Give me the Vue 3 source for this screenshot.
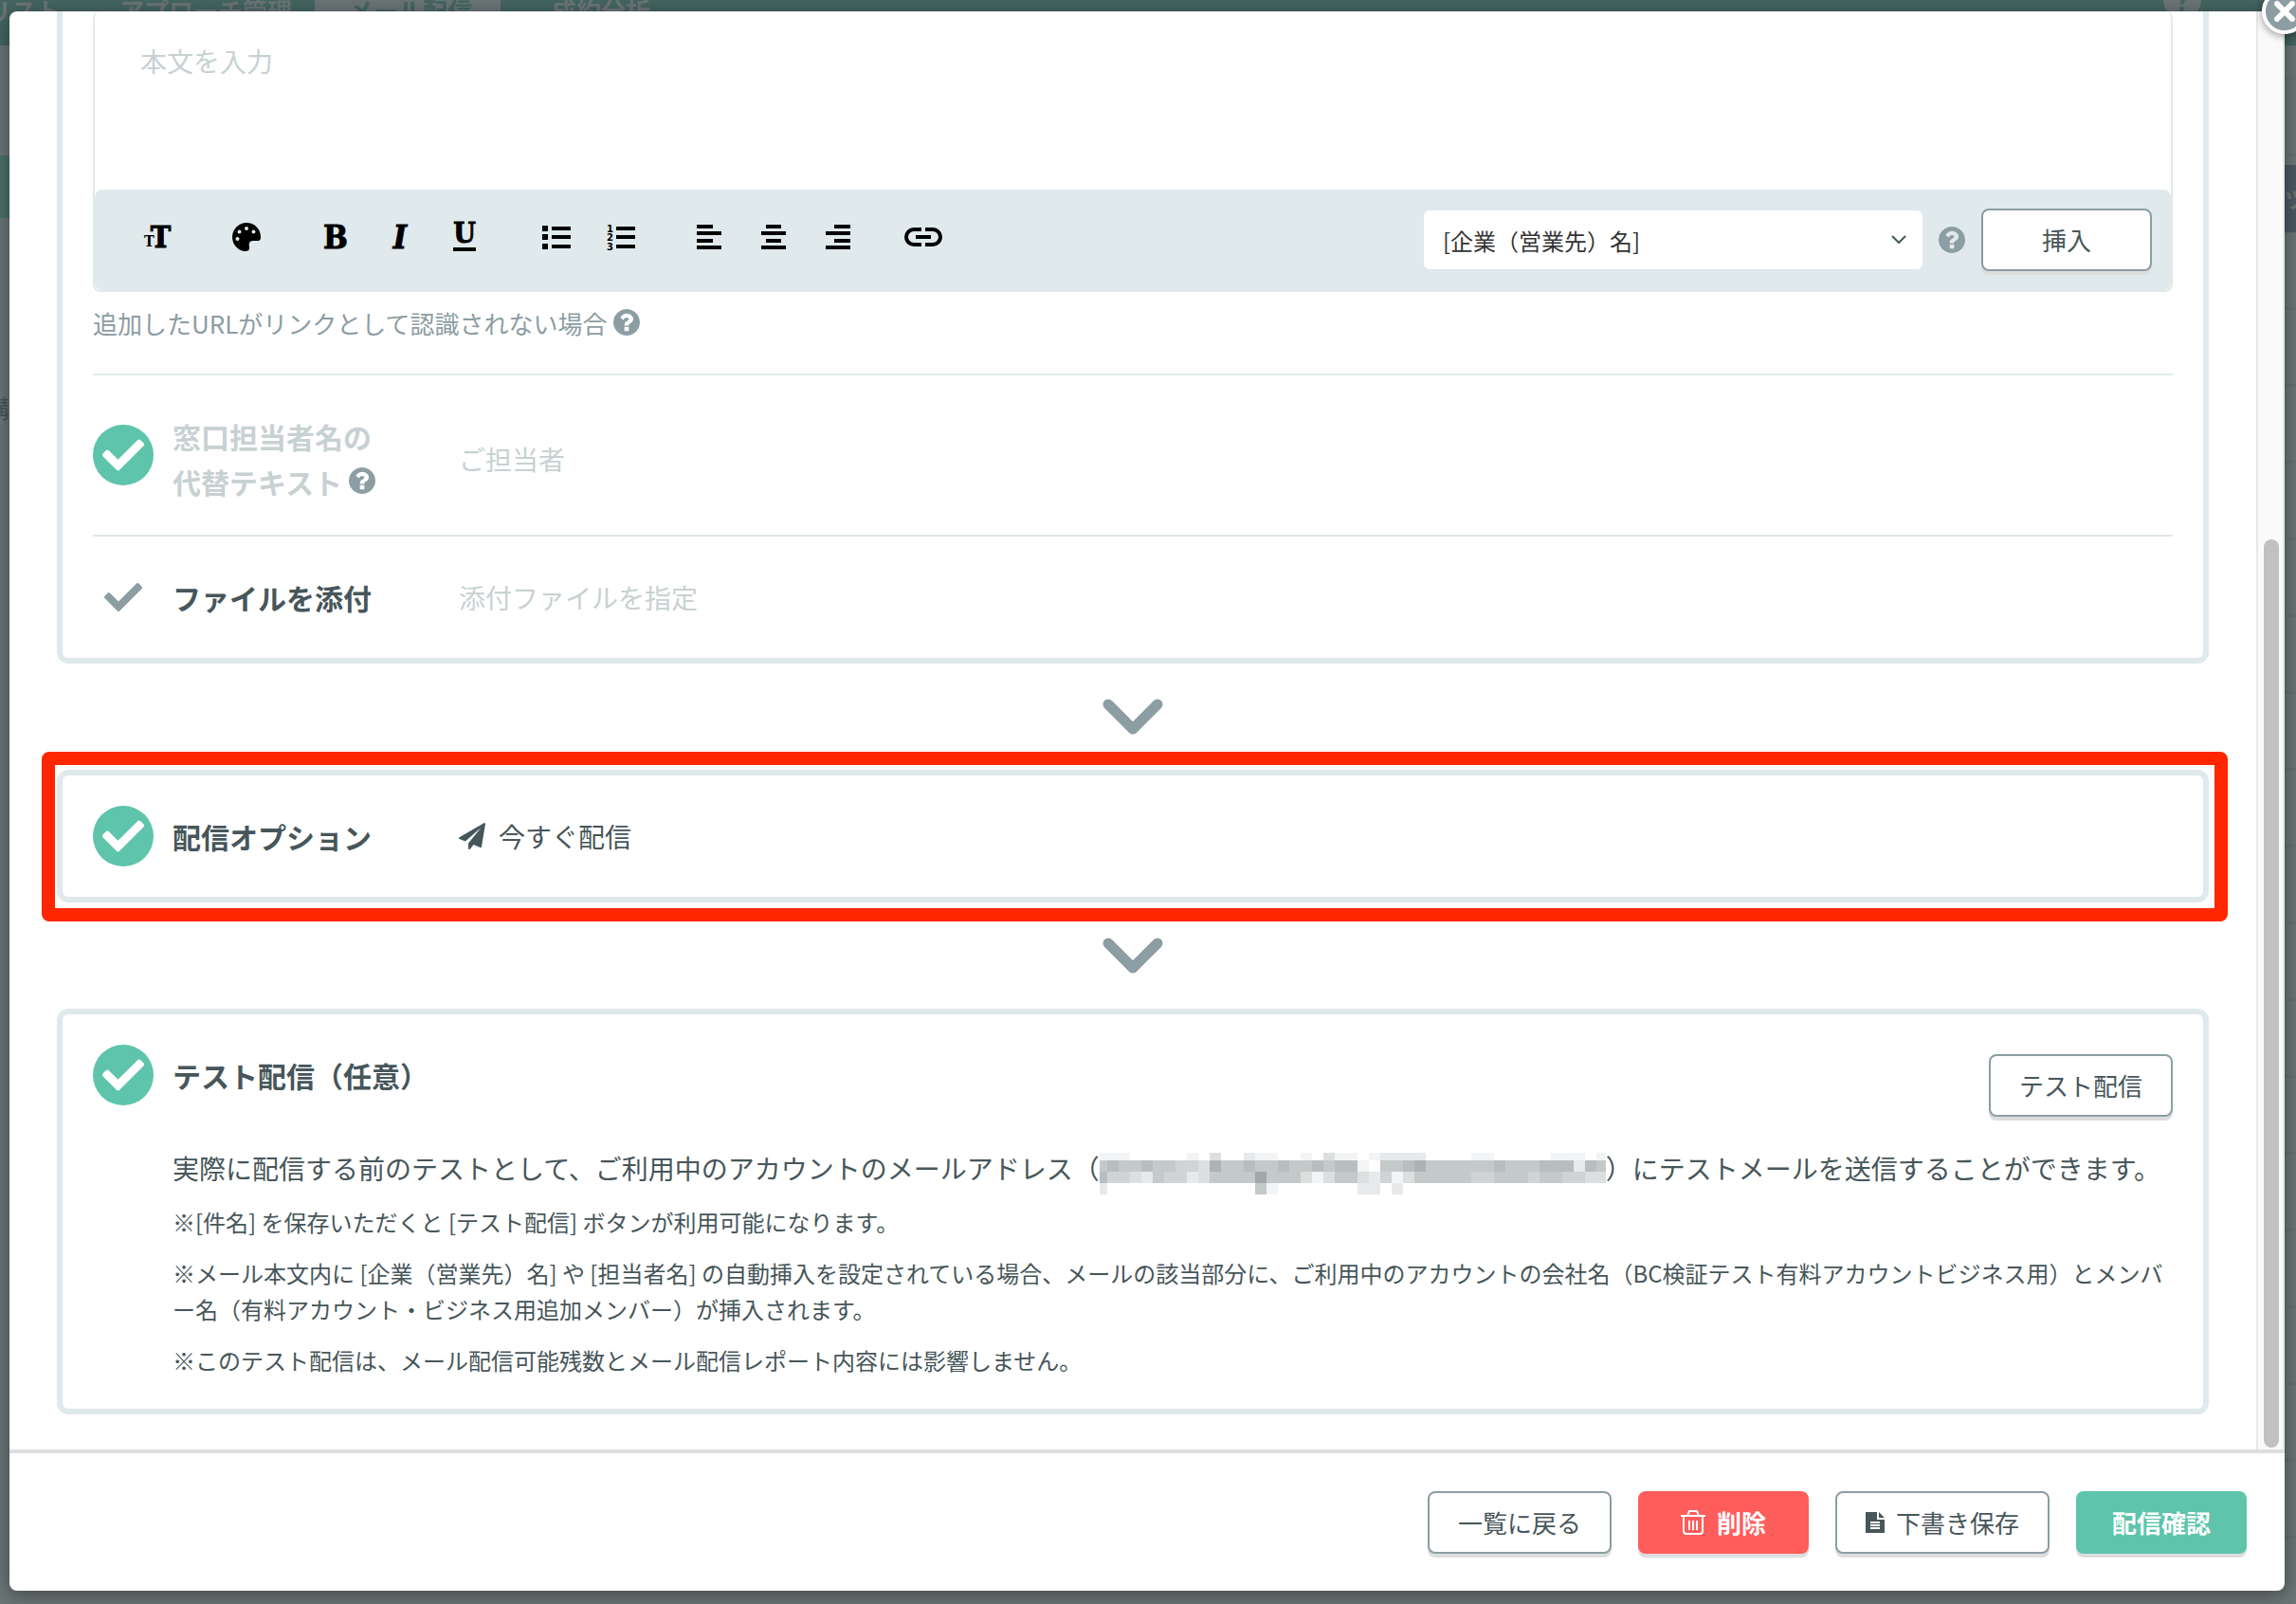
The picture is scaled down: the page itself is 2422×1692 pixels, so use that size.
<script setup>
import { ref } from 'vue'

const body = ref('')
const field = ref('company')

const CHECK =
  'M173.898 439.404l-166.4-166.4c-9.997-9.997-9.997-26.206 0-36.204l36.203-36.204c9.997-9.998 26.207-9.998 36.204 0L192 312.69 432.095 72.596c9.997-9.997 26.207-9.997 36.204 0l36.203 36.204c9.997 9.997 9.997 26.206 0 36.204l-294.4 294.401c-9.998 9.997-26.207 9.997-36.204-.001z'
const QUESTION =
  'M1024 1376v-192q0-14-9-23t-23-9h-192q-14 0-23 9t-9 23v192q0 14 9 23t23 9h192q14 0 23-9t9-23zm256-672q0-88-55.5-163t-138.5-116-170-41q-243 0-371 213-15 24 8 42l132 100q7 6 19 6 16 0 25-12 53-68 86-92 34-24 86-24 48 0 85.5 26t37.5 59q0 38-20 61t-68 45q-63 28-115.5 86.5t-52.5 125.5v36q0 14 9 23t23 9h192q14 0 23-9t9-23q0-19 21.5-49.5t54.5-49.5q32-18 49-28.5t46-35 44.5-48 28-60.5 12.5-81zm384 192q0 209-103 385.5t-279.5 279.5-385.5 103-385.5-103-279.5-279.5-103-385.5 103-385.5 279.5-279.5 385.5-103 385.5 103 279.5 279.5 103 385.5z'
const PLANE =
  'M1764 11q33 24 27 64l-256 1536q-5 29-32 45-14 8-31 8-11 0-24-5l-453-185-242 295q-18 23-49 23-13 0-22-4-19-7-30.5-23.5t-11.5-36.5v-349l864-1059-1069 925-395-162q-37-14-40-55-2-40 32-59l1664-960q15-9 32-9 20 0 36 11z'

// Pixelated address: one digit per 12px cell, 0 = white, 9 = darkest
const mosaicRows = [
  { y: 0, h: 8, cells: '111000001030021100103110122220000110000011101' },
  { y: 8, h: 12, cells: '565565544375565565565661055675555556555666265' },
  { y: 20, h: 12, cells: '644325442355558555313553241355555445554554433' },
  { y: 32, h: 12, cells: '200000000000005100000002202000000000000000000' },
]
const mosaic = mosaicRows.flatMap((row) =>
  [...row.cells].map((level, i) => ({
    x: i * 12,
    y: row.y,
    h: row.h,
    opacity: Number(level) * 0.064,
  })),
)
</script>

<template>
  <div class="page" lang="ja">
    <div class="under">
      <nav class="under-nav">
        <a class="tab first" href="#">リスト</a>
        <a class="tab" href="#">アプローチ管理</a>
        <a class="tab current" href="#">メール配信</a>
        <a class="tab last" href="#">成約分析</a>
        <span class="under-help">?</span>
      </nav>
      <div class="under-body">
        <div class="under-left"><i></i><span>講</span></div>
        <div class="under-right"><b>ツ</b></div>
      </div>
    </div>

    <div class="modal" role="dialog" aria-label="メール配信">
      <div class="scroll">
        <main class="content">
          <section class="card card-first">
            <div class="editor">
              <textarea v-model="body" aria-label="本文" placeholder="本文を入力"></textarea>
              <div class="toolbar">
                <div class="group">
                  <button class="tool" aria-label="文字サイズ"><span class="small-t">T</span><span class="big-t">T</span></button>
                </div>
                <div class="group">
                  <button class="tool" aria-label="文字色">
                    <svg width="30" height="30" viewBox="0 0 30 30"><path fill-rule="evenodd" d="M15 0A15 15 0 0 0 0 15c0 8 6 14.500 13.500 15 3.500.2 5-1.500 4.500-4.500-.8-4 .2-6.500 4-6.500h4.500c3 0 3.500-1.500 3.500-4C30 6 23 0 15 0zM5.500 15a2 2 0 1 1 0 4 2 2 0 0 1 0-4zM7.500 7.500a2 2 0 1 1 0 4 2 2 0 0 1 0-4zM15 4a2 2 0 1 1 0 4 2 2 0 0 1 0-4zM22.500 7.500a2 2 0 1 1 0 4 2 2 0 0 1 0-4z" /></svg>
                  </button>
                </div>
                <div class="group">
                  <button class="tool letter" aria-label="太字">B</button>
                  <button class="tool letter italic" aria-label="斜体">I</button>
                  <button class="tool letter under-line" aria-label="下線"><span>U</span></button>
                </div>
                <div class="group">
                  <button class="tool" aria-label="箇条書き">
                    <svg width="40" height="30" viewBox="0 0 40 30"><path d="M8 3h6v6H8zM8 12h6v6H8zM8 22h6v6H8zM18 4h20v4H18zM18 13h20v4H18zM18 23h20v4H18z" /></svg>
                  </button>
                  <button class="tool" aria-label="番号付きリスト">
                    <svg width="40" height="30" viewBox="0 0 40 30"><path d="M18 4h20v4H18zM18 13h20v4H18zM18 23h20v4H18z" /><g class="digits"><text x="8" y="10">1</text><text x="8" y="19">2</text><text x="8" y="29">3</text></g></svg>
                  </button>
                </div>
                <div class="group">
                  <button class="tool" aria-label="左揃え">
                    <svg width="40" height="30" viewBox="0 0 40 30"><path d="M9 2h17v4H9zM9 9h26v4H9zM9 17h17v4H9zM9 24h26v4H9z" /></svg>
                  </button>
                  <button class="tool" aria-label="中央揃え">
                    <svg width="40" height="30" viewBox="0 0 40 30"><path d="M14 2h16v4H14zM9 9h26v4H9zM14 17h16v4H14zM9 24h26v4H9z" /></svg>
                  </button>
                  <button class="tool" aria-label="右揃え">
                    <svg width="40" height="30" viewBox="0 0 40 30"><path d="M18 2h17v4H18zM9 9h26v4H9zM18 17h17v4H18zM9 24h26v4H9z" /></svg>
                  </button>
                </div>
                <div class="group">
                  <button class="tool" aria-label="リンク">
                    <svg width="44" height="20" viewBox="0 0 44 20"><path fill="none" stroke="#000" stroke-width="4" d="M18 2h-8a8 8 0 0 0 0 16h8M22 2h8a8 8 0 0 1 0 16h-8" /><path d="M12 8h16v4H12z" /></svg>
                  </button>
                </div>
                <div class="insert">
                  <span class="select">
                    <select v-model="field" aria-label="挿入する項目">
                      <option value="company">[企業（営業先）名]</option>
                      <option value="person">[担当者名]</option>
                    </select>
                    <svg width="18" height="12" viewBox="0 0 18 12"><path fill="none" stroke="#47565a" stroke-width="2" d="M2 2l7 7 7-7" /></svg>
                  </span>
                  <svg class="help" viewBox="128 128 1536 1536"><path :d="QUESTION" /></svg>
                  <button class="btn">挿入</button>
                </div>
              </div>
            </div>
            <p class="hint">追加したURLがリンクとして認識されない場合<svg class="help" viewBox="128 128 1536 1536"><path :d="QUESTION" /></svg></p>

            <div class="row ruled muted">
              <span class="badge"><svg viewBox="0 0 512 512"><path :d="CHECK" /></svg></span>
              <h2 class="nudge">窓口担当者名の<br />代替テキスト <svg class="help" viewBox="128 128 1536 1536"><path :d="QUESTION" /></svg></h2>
              <p class="value nudge">ご担当者</p>
            </div>
            <div class="row ruled">
              <span class="badge plain"><svg viewBox="0 0 512 512"><path :d="CHECK" /></svg></span>
              <h2>ファイルを添付</h2>
              <p class="value pale">添付ファイルを指定</p>
            </div>
          </section>

          <div class="arrow"><svg width="64" height="38" viewBox="0 0 64 38"><path d="M6 6l26 26L58 6" /></svg></div>

          <section class="card marked">
            <div class="row">
              <span class="badge"><svg viewBox="0 0 512 512"><path :d="CHECK" /></svg></span>
              <h2>配信オプション</h2>
              <p class="value"><svg class="plane" viewBox="0 0 1792 1792"><path :d="PLANE" /></svg>今すぐ配信</p>
            </div>
          </section>

          <div class="arrow"><svg width="64" height="38" viewBox="0 0 64 38"><path d="M6 6l26 26L58 6" /></svg></div>

          <section class="card test">
            <header>
              <span class="badge"><svg viewBox="0 0 512 512"><path :d="CHECK" /></svg></span>
              <h2>テスト配信（任意）</h2>
              <button class="btn">テスト配信</button>
            </header>
            <div class="text">
              <p class="lead">実際に配信する前のテストとして、ご利用中のアカウントのメールアドレス（<svg class="mosaic" width="534" height="44" viewBox="4 0 534 44" shape-rendering="crispEdges"><rect v-for="(c, i) in mosaic" :key="i" :x="c.x" :y="c.y" width="12" :height="c.h" fill="#47565a" :fill-opacity="c.opacity" /></svg>）にテストメールを送信することができます。</p>
              <p>※[件名] を保存いただくと [テスト配信] ボタンが利用可能になります。</p>
              <p>※メール本文内に [企業（営業先）名] や [担当者名] の自動挿入を設定されている場合、メールの該当部分に、ご利用中のアカウントの会社名（BC検証テスト有料アカウントビジネス用）とメンバー名（有料アカウント・ビジネス用追加メンバー）が挿入されます。</p>
              <p>※このテスト配信は、メール配信可能残数とメール配信レポート内容には影響しません。</p>
            </div>
          </section>
        </main>
        <div class="track"><div class="thumb"></div></div>
      </div>

      <footer class="actions">
        <button class="btn">一覧に戻る</button>
        <button class="btn danger">
          <svg width="26" height="26" viewBox="0 0 26 26"><g fill="none" stroke="#fff" stroke-width="2"><path d="M0 6h26M7 6l2-5h8l2 5M3 6v16q0 3 3 3h14q3 0 3-3V6M9 11v10M13 11v10M17 11v10" /></g></svg>削除
        </button>
        <button class="btn">
          <svg width="20" height="22" viewBox="0 0 20 22"><path fill="#47565a" fill-rule="evenodd" d="M0 0h12v8h8v14H0zM14 0l6 6h-6zM5 10v2h10v-2zM5 13v2h10v-2zM5 16v2h10v-2z" /></svg>下書き保存
        </button>
        <button class="btn primary">配信確認</button>
      </footer>

      <button class="close" aria-label="閉じる">
        <svg width="22" height="22" viewBox="0 0 22 22"><path d="M3 3l16 16M19 3L3 19" /></svg>
      </button>
    </div>
  </div>
</template>

<style>
body {
  margin: 0;
  background: #6b7576;
}
</style>

<style scoped>
* {
  box-sizing: border-box;
}
.page {
  position: relative;
  display: flex;
  min-height: 100vh;
  padding: 12px 12px 14px 10px;
  overflow: hidden;
  color: #47565a;
  font-family: "Noto Sans CJK JP", "Noto Sans", sans-serif;
  font-size: 28px;
}
p,
h2 {
  margin: 0;
}
button,
select,
textarea {
  font-family: inherit;
  color: inherit;
}
svg {
  flex: none;
}

/* Dimmed page under the dialog */
.under {
  position: absolute;
  inset: 0;
  display: flex;
  flex-direction: column;
}
.under-nav {
  display: flex;
  height: 48px;
  background: #446560;
}
.tab {
  padding: 0 24px 0 36px;
  color: #6b7576;
  font-size: 26px;
  font-weight: 700;
  line-height: 22px;
  text-decoration: none;
  white-space: nowrap;
}
.tab.first {
  display: flex;
  justify-content: flex-end;
  width: 90px;
  padding: 0 26px 0 0;
}
.tab.current {
  padding: 0 30px 0 36px;
  background: #6b7576;
  color: #446560;
}
.tab.last {
  padding-left: 54px;
}
.under-help {
  width: 40px;
  height: 40px;
  margin: -20px 100px 0 auto;
  border-radius: 20px;
  background: #6b7576;
  color: #446560;
  font-weight: 700;
  line-height: 40px;
  text-align: center;
}
.under-body {
  display: flex;
  flex: 1;
  justify-content: space-between;
}
.under-left {
  width: 10px;
  overflow: hidden;
  padding-top: 116px;
  font-size: 26px;
}
.under-left i {
  display: block;
  height: 66px;
  margin-bottom: 180px;
  background: #4b6f66;
}
.under-left span {
  display: flex;
  justify-content: flex-end;
  width: 10px;
  line-height: 40px;
}
.under-right {
  width: 12px;
  overflow: hidden;
  padding-top: 126px;
  background: repeating-linear-gradient(#6b7576 0 33px, #647072 33px 36px, #6b7576 36px 81px);
}
.under-right b {
  display: block;
  height: 71px;
  background: #4b5962;
  color: #6b7576;
  font-size: 24px;
  line-height: 71px;
}

/* Dialog */
.modal {
  position: relative;
  display: flex;
  flex: 1;
  flex-direction: column;
  min-width: 0;
  border-radius: 8px;
  background: #fff;
  box-shadow: 0 4px 20px rgba(0, 0, 0, 0.4);
}
.scroll {
  display: flex;
  flex: 1;
}
.content {
  flex: 1;
  min-width: 0;
  padding: 0 50px 36px;
}
.track {
  display: flex;
  flex-direction: column;
  justify-content: flex-end;
  width: 30px;
  padding: 2px 4px 2px 6px;
  border: solid #e8e8e8;
  border-width: 0 2px;
  background: #fafafa;
}
.thumb {
  height: 63.3%;
  border-radius: 8px;
  background: #c1c1c1;
}
.card {
  padding: 0 32px;
  border: 6px solid #e0e9eb;
  border-radius: 12px;
}
.card-first {
  border-top: 0;
  border-radius: 0 0 12px 12px;
}

/* Editor */
.editor {
  border: 2px solid #e0e9eb;
  border-top: 0;
  border-radius: 8px;
}
textarea {
  display: block;
  width: 100%;
  height: 188px;
  padding: 30px 48px;
  border: 0;
  outline: 0;
  background: transparent;
  font-size: 28px;
  line-height: 44px;
  resize: none;
}
textarea::placeholder {
  color: #c8d1d2;
}
.toolbar {
  display: flex;
  align-items: center;
  gap: 26px;
  height: 106px;
  padding: 0 20px 0 32px;
  border-radius: 8px;
  background: #e0e9eb;
}
.group {
  display: flex;
  padding-bottom: 6px;
}
.tool {
  display: flex;
  align-items: center;
  justify-content: center;
  width: 68px;
  height: 48px;
  padding: 0;
  border: 0;
  background: none;
  color: #000;
  font-family: "DejaVu Serif Condensed", "DejaVu Serif", serif;
  font-weight: 700;
  -webkit-text-stroke: 1px #000;
}
.tool svg {
  -webkit-text-stroke: 0;
}
.letter {
  font-size: 34px;
  line-height: 48px;
}
.italic {
  font-style: italic;
}
.under-line span {
  height: 30px;
  border-bottom: 4px solid #000;
  font-size: 30px;
  line-height: 22px;
}
.small-t {
  padding-top: 10px;
  font-size: 16px;
  line-height: 48px;
  -webkit-text-stroke: 0;
}
.big-t {
  margin-left: -4px;
  font-size: 32px;
  line-height: 48px;
}
.digits {
  font: 700 10px "DejaVu Sans", sans-serif;
}
.insert {
  display: flex;
  align-items: center;
  gap: 17px;
  margin-left: auto;
}
.select {
  position: relative;
  display: flex;
  align-items: center;
}
.select select {
  width: 526px;
  height: 62px;
  padding: 0 48px 0 20px;
  border: 0;
  border-radius: 6px;
  background: #fff;
  color: #333;
  font-size: 24px;
  appearance: none;
}
.select svg {
  position: absolute;
  right: 16px;
  pointer-events: none;
}
.help {
  width: 28px;
  height: 28px;
  fill: #8c9da3;
}
.hint {
  display: flex;
  align-items: center;
  gap: 6px;
  height: 86px;
  padding-bottom: 22px;
  color: #8c9da3;
  font-size: 26px;
}

/* Rows */
.row {
  display: grid;
  grid-template-columns: 64px 282px 1fr;
  column-gap: 20px;
  align-items: center;
  min-height: 128px;
}
.ruled {
  min-height: 130px;
  border-top: 2px solid #e0e9eb;
}
.row.muted {
  min-height: 170px;
  color: #c8d1d2;
}
.nudge {
  padding-top: 8px;
}
.badge {
  display: flex;
  align-items: center;
  justify-content: center;
  width: 64px;
  height: 64px;
  border-radius: 50%;
  background: #5ec4ac;
  fill: #fff;
}
.badge svg {
  width: 44px;
  height: 44px;
}
.badge.plain {
  background: none;
  fill: #8c9da3;
}
.badge.plain svg {
  width: 40px;
  height: 40px;
}
h2 {
  font-size: 30px;
  font-weight: 700;
  line-height: 48px;
  white-space: nowrap;
}
.value {
  display: flex;
  align-items: center;
  gap: 14px;
  line-height: 44px;
}
.pale {
  color: #c8d1d2;
}
.row {
  grid-template-columns: 64px 282px 1fr;
}
.plane {
  width: 28px;
  height: 28px;
  fill: #47565a;
}
.arrow {
  display: flex;
  align-items: center;
  justify-content: center;
  height: 112px;
}
.arrow path {
  fill: none;
  stroke: #8c9da3;
  stroke-width: 11;
  stroke-linecap: round;
  stroke-linejoin: round;
}

/* Red frame round the option card */
.marked {
  position: relative;
}
.marked::after {
  content: "";
  position: absolute;
  inset: -25px -26px -26px -22px;
  border: 14px solid #ff2600;
  border-radius: 8px;
  pointer-events: none;
}

/* Test mail */
.test {
  padding: 32px;
}
.test header {
  display: flex;
  align-items: flex-start;
  gap: 20px;
}
.test h2 {
  line-height: 64px;
}
.test header .btn {
  margin: 10px 0 0 auto;
}
.text {
  display: flex;
  flex-direction: column;
  gap: 16px;
  padding: 32px 0 0 84px;
  font-size: 24px;
  line-height: 38px;
}
.text p {
  line-break: anywhere;
}
.text .lead {
  height: 44px;
  font-size: 28px;
  line-height: 44px;
  white-space: nowrap;
}
.mosaic {
  margin-top: 6px;
  vertical-align: top;
}

/* Buttons */
.btn {
  display: flex;
  align-items: center;
  justify-content: center;
  gap: 12px;
  min-width: 180px;
  height: 66px;
  padding: 0 30px;
  border: 2px solid #8c9da3;
  border-radius: 8px;
  background: #fff;
  box-shadow: 0 4px 0 #ddd;
  font-size: 26px;
  line-height: 38px;
  white-space: nowrap;
}
.btn.danger,
.btn.primary {
  border-color: transparent;
  background: #ff5c5c border-box;
  color: #fff;
  font-weight: 700;
}
.btn.primary {
  background: #5ec4ac border-box;
}
.actions {
  display: flex;
  justify-content: flex-end;
  gap: 28px;
  padding: 40px 40px 39px;
  border-top: 4px solid #dcdee0;
}
.close {
  position: absolute;
  top: -24px;
  right: -24px;
  display: flex;
  align-items: center;
  justify-content: center;
  width: 48px;
  height: 48px;
  padding: 0;
  border: 4px solid #fff;
  border-radius: 50%;
  background: #8c9da3;
  box-shadow: 0 2px 8px rgba(0, 0, 0, 0.4);
}
.close path {
  fill: none;
  stroke: #fff;
  stroke-width: 6;
  stroke-linecap: round;
}
</style>
